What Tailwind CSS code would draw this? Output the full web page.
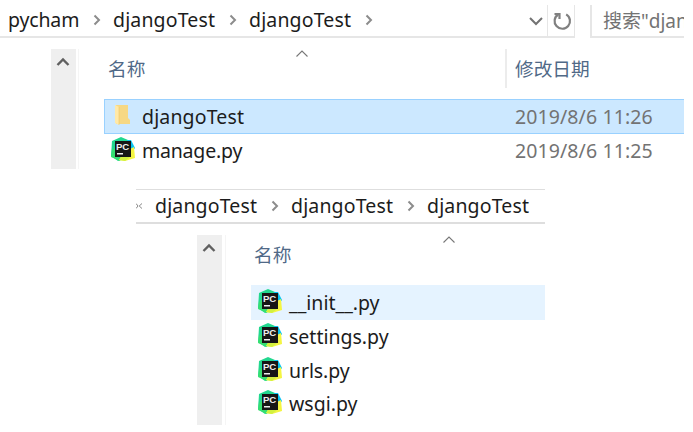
<!DOCTYPE html>
<html lang="zh-CN">
<head>
    <meta charset="UTF-8">
    <meta name="viewport" content="width=device-width, initial-scale=1.0">
    <title>djangoTest</title>
    <script src="https://cdn.jsdelivr.net/npm/@tailwindcss/browser@4"></script>
</head>
<body class="bg-white overflow-hidden font-['Noto_Sans','Noto_Sans_CJK_SC',sans-serif] text-[19.5px] leading-[28px] text-[#1c1c1c] whitespace-nowrap">
    <!-- Shared icons -->
    <svg class="hidden">
        <symbol id="chevron" viewBox="0 0 8 12">
            <path d="M1.5 1.5L6 6L1.5 10.5" fill="none" stroke="#8c8c8c" stroke-width="2"/>
        </symbol>
        <symbol id="scroll-up" viewBox="0 0 14 10">
            <path d="M1.5 8L7 2.5L12.5 8" fill="none" stroke="#606060" stroke-width="2.4"/>
        </symbol>
        <symbol id="sort" viewBox="0 0 12 7">
            <path d="M.5 6.5L6 1L11.5 6.5" fill="none" stroke="#777" stroke-width="1.1"/>
        </symbol>
        <symbol id="pycharm" viewBox="0 0 26 26">
            <path d="M2 5L11 1L18 4L15 23L8 25L1 20Z" fill="#22d88f"/>
            <path d="M2 14L8 10L10 25L1 21Z" fill="#36df70"/>
            <path d="M17 4L21 4L25 12L21 17Z" fill="#07c3f2"/>
            <path d="M20 13L24 11L25 22L15 25L9 24L12 19Z" fill="#f4f542"/>
            <path d="M11 21L20 21L15 25L9 24Z" fill="#d2f13f"/>
            <rect x="5" y="5" width="16" height="16" fill="#161616"/>
            <text x="6" y="13.8" fill="#eee" font-family="Liberation Sans, sans-serif" font-size="9.6" font-weight="bold" textLength="13.2">PC</text>
            <rect x="7" y="17" width="6" height="1.5" fill="#eee"/>
        </symbol>
    </svg>

    <!-- Project folder -->
    <section class="w-[684px] h-[169px] overflow-hidden">
        <div class="flex h-[38px] pt-[5px]">
            <div class="flex w-[575px] border-r border-b-2 border-[#e6e6e6]">
                <div class="flex flex-1 items-center pb-px pl-[8px]">
                    <span class="w-[85px] tracking-[-0.15px]">pycham</span>
                    <svg class="w-2 h-3 mr-3"><use href="#chevron"/></svg>
                    <span class="w-[116px] tracking-[0.15px]">djangoTest</span>
                    <svg class="w-2 h-3 mr-3"><use href="#chevron"/></svg>
                    <span class="w-[116px] tracking-[0.15px]">djangoTest</span>
                    <svg class="w-2 h-3"><use href="#chevron"/></svg>
                </div>
                <div class="flex items-center pr-[3px] border-r border-[#e6e6e6]">
                    <svg class="w-4 h-4 mt-px" viewBox="0 0 16 16"><path d="M2 5L8 11L14 5" fill="none" stroke="#737373" stroke-width="2"/></svg>
                </div>
                <div class="flex w-[25px] mr-px items-center justify-center">
                    <svg class="w-[20px] h-[20px] ml-[3px]" viewBox="0 0 20 20" fill="none" stroke="#808080" stroke-width="2.2">
                        <path d="M14.2 3.4A7.7 7.7 0 1 1 6.2 3.5"/>
                        <path d="M2.5 3H7.5V8"/>
                    </svg>
                </div>
            </div>
            <div class="flex flex-1 items-center ml-[15px] pl-[11px] overflow-hidden border-l-2 border-b-2 border-[#e6e6e6] text-[#737373] text-[19px]">搜索"djangoTest"</div>
        </div>
        <div class="flex pt-[11px]">
            <div class="flex w-[25px] h-[120px] ml-[51px] justify-center bg-[#efefef]">
                <svg class="w-[14px] h-[10px] mt-2 -ml-[2px]"><use href="#scroll-up"/></svg>
            </div>
            <div class="w-[27px] ml-[2px] border-l border-[#f5f5f5]"></div>
            <div class="flex-1">
                <div class="flex h-[39px] mb-[11px] text-[18.7px] text-[#506987]">
                    <div class="flex w-[402px] pl-[3px] border-r-2 border-[#ececec]">
                        <span class="w-[188px] pt-[6px]">名称</span>
                        <svg class="w-3 h-[7px] mt-px"><use href="#sort"/></svg>
                    </div>
                    <span class="pl-[8px] pt-[6px]">修改日期</span>
                </div>
                <div class="flex items-center h-[35px] -ml-px pl-[9px] border border-r-0 border-[#99d1ff] bg-[#cce8ff]">
                    <svg class="w-[17px] h-[22px] -mt-1" viewBox="0 0 17 22">
                        <path d="M2 1H14V14L16 16V20H2Z" fill="#f7d883"/>
                        <path d="M1 1L5 3V21L1 19Z" fill="#ffe9a8"/>
                        <path d="M5 3V21" stroke="#efc765" stroke-width=".6"/>
                    </svg>
                    <span class="w-[373px] ml-[11px] tracking-[0.15px]">djangoTest</span>
                    <span class="text-[#737373] tracking-[0.1px]">2019/8/6 11:26</span>
                </div>
                <div class="flex items-center h-[34px] pl-[5px]">
                    <svg class="w-[26px] h-[26px] -mt-1"><use href="#pycharm"/></svg>
                    <span class="w-[373px] ml-[6px] tracking-[-0.2px]">manage.py</span>
                    <span class="text-[#737373] tracking-[0.1px]">2019/8/6 11:25</span>
                </div>
            </div>
        </div>
    </section>

    <!-- Inner package -->
    <section class="w-[409px] h-[236px] mt-5 ml-[136px] overflow-hidden">
        <div class="flex items-center h-[35px] border-t border-b-2 border-[#dedede]">
            <svg class="w-[7px] h-[8px] mr-3" viewBox="0 0 7 8"><path d="M0 1.5L2 4L0 6.5M6 1.5L3.2 4L6 6.5" fill="none" stroke="#888"/></svg>
            <span class="w-[116px] tracking-[0.15px]">djangoTest</span>
            <svg class="w-2 h-3 mr-3"><use href="#chevron"/></svg>
            <span class="w-[116px] tracking-[0.15px]">djangoTest</span>
            <svg class="w-2 h-3 mr-3"><use href="#chevron"/></svg>
            <span class="tracking-[0.15px]">djangoTest</span>
        </div>
        <div class="flex pt-[11px]">
            <div class="flex w-[25px] h-[190px] ml-[61px] justify-center bg-[#efefef]">
                <svg class="w-[14px] h-[10px] mt-2 -ml-px"><use href="#scroll-up"/></svg>
            </div>
            <div class="w-[26px] ml-[3px] border-l border-[#f5f5f5]"></div>
            <div class="flex-1">
                <div class="flex h-[50px] pl-[3px] text-[18.7px] text-[#506987]">
                    <span class="w-[189px] pt-[6px]">名称</span>
                    <svg class="w-3 h-[7px] mt-px"><use href="#sort"/></svg>
                </div>
                <div class="flex items-center h-[35px] pl-[6px] bg-[#e5f3ff]">
                    <svg class="w-[26px] h-[26px] -mt-1"><use href="#pycharm"/></svg>
                    <span class="ml-[6px]">__init__.py</span>
                </div>
                <div class="flex items-center h-[34px] pl-[6px]">
                    <svg class="w-[26px] h-[26px] -mt-1"><use href="#pycharm"/></svg>
                    <span class="ml-[6px]">settings.py</span>
                </div>
                <div class="flex items-center h-[33px] pl-[6px]">
                    <svg class="w-[26px] h-[26px] -mt-1"><use href="#pycharm"/></svg>
                    <span class="ml-[6px] tracking-[-0.1px]">urls.py</span>
                </div>
                <div class="flex items-center h-[34px] pl-[6px]">
                    <svg class="w-[26px] h-[26px] -mt-1"><use href="#pycharm"/></svg>
                    <span class="ml-[6px]">wsgi.py</span>
                </div>
            </div>
        </div>
    </section>
</body>
</html>
